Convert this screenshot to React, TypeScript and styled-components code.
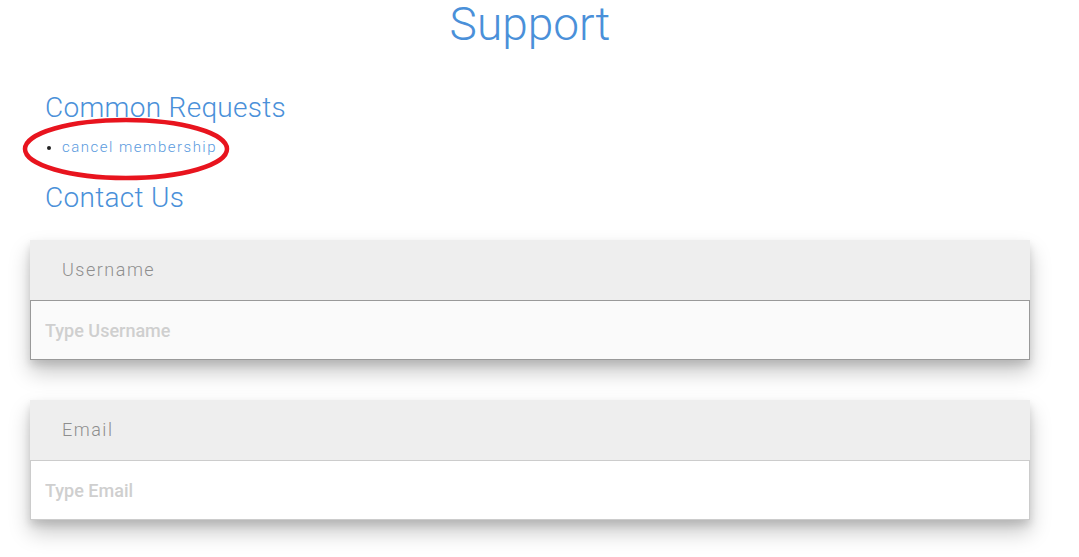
import React from 'react'
import styled, { createGlobalStyle, css } from 'styled-components'

const GlobalStyle = createGlobalStyle`
  html, body {
    margin: 0;
    padding: 0;
    background: #ffffff;
    font-family: Roboto, "Noto Sans", "Liberation Sans", sans-serif;
  }
`

const Page = styled.div`
  position: relative;
  width: 1000px;
  padding: 0 0 40px 30px;
`

const Title = styled.h1`
  margin: 1px 0 0;
  font-size: 46px;
  line-height: 46px;
  font-weight: 300;
  color: #4a90d9;
  text-align: center;
`

const Section = styled.div`
  padding: 0 15px;
`

const Heading = styled.h2<{ $top: number }>`
  margin: ${(p) => p.$top}px 0 0;
  font-size: 28px;
  line-height: 28px;
  font-weight: 300;
  letter-spacing: 0.3px;
  color: #4a90d9;
`

const List = styled.ul`
  margin: 15px 0 0;
  padding-left: 17px;
  font-size: 15px;
  line-height: 20px;
  li::marker {
    color: #222;
    font-size: 13px;
  }
`

const Link = styled.a`
  color: #5a9ade;
  font-weight: 300;
  letter-spacing: 1.5px;
  text-decoration: none;
`

const Cards = styled.div`
  display: flex;
  flex-direction: column;
  gap: 40px;
  margin-top: 28px;
`

const Card = styled.div`
  display: flex;
  flex-direction: column;
  box-shadow: 0 12px 20px rgba(0, 0, 0, 0.22), 0 5px 8px rgba(0, 0, 0, 0.12);
`

const CardHeader = styled.div`
  display: flex;
  align-items: center;
  height: 60px;
  padding-left: 32px;
  background: #eeeeee;
  font-size: 18px;
  line-height: 18px;
  font-weight: 300;
  letter-spacing: 1.5px;
  color: #8e8e8e;
`

const Input = styled.input<{ $active?: boolean }>`
  box-sizing: border-box;
  height: 60px;
  width: 100%;
  margin: 0;
  padding: 0 14px;
  border: 1px solid #cccccc;
  background: #ffffff;
  font-family: Roboto, "Noto Sans", "Liberation Sans", sans-serif;
  font-size: 18px;
  font-weight: 500;
  color: #333;
  outline: none;
  &::placeholder {
    color: #cfcfcf;
  }
  ${(p) =>
    p.$active &&
    css`
      border-color: #999999;
      background: #fafafa;
    `}
`

const Annotation = styled.svg`
  position: absolute;
  left: 20px;
  top: 114px;
  pointer-events: none;
`

const fields = [
  { label: 'Username', placeholder: 'Type Username', active: true },
  { label: 'Email', placeholder: 'Type Email', active: false },
]

export default function App() {
  return (
    <>
      <GlobalStyle />
      <Page>
        <Title>Support</Title>
        <Section>
          <Heading $top={47}>Common Requests</Heading>
          <List>
            <li>
              <Link href="#">cancel membership</Link>
            </li>
          </List>
          <Heading $top={27}>Contact Us</Heading>
        </Section>
        <Cards>
          {fields.map((f) => (
            <Card key={f.label}>
              <CardHeader>{f.label}</CardHeader>
              <Input
                $active={f.active}
                placeholder={f.placeholder}
                autoFocus={f.active}
              />
            </Card>
          ))}
        </Cards>
        <Annotation width="214" height="70" viewBox="0 0 214 70">
          <ellipse
            cx="106"
            cy="34"
            rx="101"
            ry="29"
            fill="none"
            stroke="#e8141e"
            strokeWidth="4.5"
          />
        </Annotation>
      </Page>
    </>
  )
}
